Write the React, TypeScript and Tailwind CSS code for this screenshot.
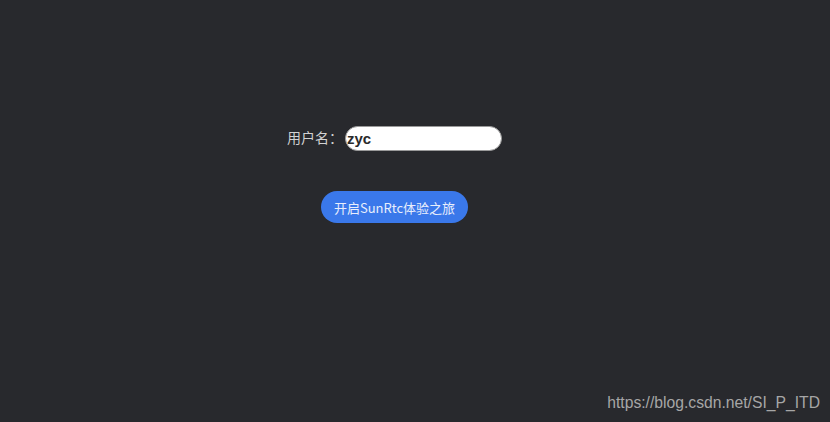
export default function App() {
  return (
    <div
      className="relative h-[422px] w-[830px] overflow-hidden bg-[#28292d]"
      style={{ fontFamily: '"Noto Sans CJK SC", "Liberation Sans", sans-serif' }}
    >
      <div className="ml-[287px] flex w-[215px] flex-col items-center pt-[126px]">
        <div className="flex h-[25px] w-full items-center">
          <label className="mb-[4px] w-[58px] text-[14px] leading-none text-[#d2d2d2]">用户名：</label>
          <input
            className="h-[25px] w-[157px] rounded-full border border-[#9a9a9a] bg-white px-0 pl-px text-[15px] font-semibold text-[#2a2a2a] outline-none"
            style={{ fontFamily: '"Liberation Sans", sans-serif' }}
            defaultValue="zyc"
          />
        </div>
        <button className="mt-[40px] h-[32px] w-[147px] rounded-full bg-[#3a78ea] pt-px text-[13px] leading-none text-[#e8eefc]">
          开启SunRtc体验之旅
        </button>
      </div>
      <div
        className="absolute right-[10px] bottom-[11px] text-[15.7px] leading-none text-[#a6a6a6]"
        style={{ fontFamily: '"Liberation Sans", sans-serif' }}
      >
        https://blog.csdn.net/SI_P_ITD
      </div>
    </div>
  );
}
